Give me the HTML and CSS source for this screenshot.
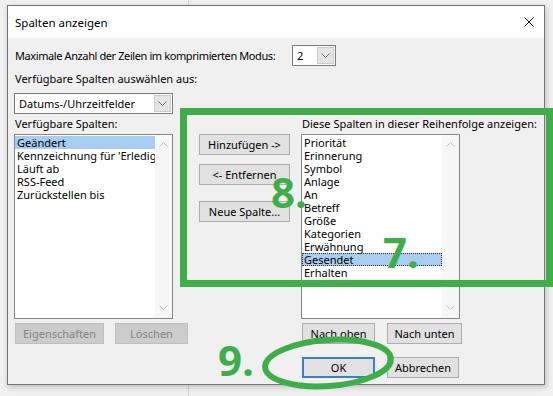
FILE: index.html
```html
<!DOCTYPE html>
<html lang="de">
<head>
    <meta charset="UTF-8">
    <title>Spalten anzeigen</title>
    <link rel="stylesheet" href="styles.css">
</head>
<body>
    <div class="dialog">
        <!-- Titelleiste -->
        <div class="titlebar">
            <span class="title">Spalten anzeigen</span>
            <svg class="close" width="10" height="10" viewBox="0 0 10 10">
                <path d="M0.5 0.5 L9.5 9.5 M9.5 0.5 L0.5 9.5" stroke="#111" stroke-width="1" fill="none"/>
            </svg>
        </div>

        <div class="content">
            <div class="row-max">
                <span class="max-label">Maximale Anzahl der Zeilen im komprimierten Modus:</span>
                <div class="combo combo-small">
                    <span class="combo-value">2</span>
                    <span class="combo-btn">
                        <svg width="9" height="5" viewBox="0 0 9 5"><path d="M0.5 0.5 L4.5 4.5 L8.5 0.5" stroke="#6d6d6d" fill="none"/></svg>
                    </span>
                </div>
            </div>

            <div class="label-from">Verfügbare Spalten auswählen aus:</div>
            <div class="combo combo-wide">
                <span class="combo-value">Datums-/Uhrzeitfelder</span>
                <span class="combo-btn">
                    <svg width="9" height="5" viewBox="0 0 9 5"><path d="M0.5 0.5 L4.5 4.5 L8.5 0.5" stroke="#6d6d6d" fill="none"/></svg>
                </span>
            </div>

            <div class="columns">
                <!-- links: verfügbare Spalten -->
                <div class="col-left">
                    <div class="col-label">Verfügbare Spalten:</div>
                    <div class="listbox">
                        <ul class="items">
                            <li class="selected">Geändert</li>
                            <li>Kennzeichnung für 'Erledigt'</li>
                            <li>Läuft ab</li>
                            <li>RSS-Feed</li>
                            <li>Zurückstellen bis</li>
                        </ul>
                        <div class="scrollbar">
                            <svg width="9" height="5" viewBox="0 0 9 5"><path d="M0.5 4.5 L4.5 0.5 L8.5 4.5" stroke="#c2c2c2" fill="none"/></svg>
                            <svg width="9" height="5" viewBox="0 0 9 5"><path d="M0.5 0.5 L4.5 4.5 L8.5 0.5" stroke="#c2c2c2" fill="none"/></svg>
                        </div>
                    </div>
                    <div class="btn-row">
                        <button class="btn btn-props" disabled>Eigenschaften</button>
                        <button class="btn btn-delete" disabled>Löschen</button>
                    </div>
                </div>

                <!-- mitte: hinzufügen / entfernen -->
                <div class="col-mid">
                    <button class="btn btn-mid">Hinzufügen -&gt;</button>
                    <button class="btn btn-mid btn-remove">&lt;- Entfernen</button>
                    <button class="btn btn-mid btn-new">Neue Spalte...</button>
                </div>

                <!-- rechts: angezeigte Spalten -->
                <div class="col-right">
                    <div class="col-label">Diese Spalten in dieser Reihenfolge anzeigen:</div>
                    <div class="listbox">
                        <ul class="items">
                            <li>Priorität</li>
                            <li>Erinnerung</li>
                            <li>Symbol</li>
                            <li>Anlage</li>
                            <li>An</li>
                            <li>Betreff</li>
                            <li>Größe</li>
                            <li>Kategorien</li>
                            <li>Erwähnung</li>
                            <li class="selected focus">Gesendet</li>
                            <li>Erhalten</li>
                        </ul>
                        <div class="scrollbar">
                            <svg width="9" height="5" viewBox="0 0 9 5"><path d="M0.5 4.5 L4.5 0.5 L8.5 4.5" stroke="#c2c2c2" fill="none"/></svg>
                            <svg width="9" height="5" viewBox="0 0 9 5"><path d="M0.5 0.5 L4.5 4.5 L8.5 0.5" stroke="#c2c2c2" fill="none"/></svg>
                        </div>
                    </div>
                    <div class="btn-row btn-row-right">
                        <button class="btn btn-up">Nach oben</button>
                        <button class="btn btn-down">Nach unten</button>
                    </div>
                    <div class="btn-row btn-row-ok">
                        <button class="btn btn-ok">OK</button>
                        <button class="btn btn-cancel">Abbrechen</button>
                    </div>
                </div>
            </div>
        </div>
    </div>

    <!-- grüne Markierungen -->
    <div class="mark-box"></div>
    <span class="mark-num num-8">8.</span>
    <span class="mark-num num-7">7.</span>
    <span class="mark-num num-9">9.</span>
    <svg class="mark-ring" width="160" height="70" viewBox="0 0 160 70">
        <ellipse cx="80" cy="35" rx="63" ry="23" transform="rotate(-4 80 35)" fill="none" stroke="#3fae4a" stroke-width="6"/>
    </svg>
</body>
</html>
```

FILE: styles.css
```css
* {
    margin: 0;
    padding: 0;
    box-sizing: border-box;
}
ul {
    list-style: none;
}
html, body {
    width: 553px;
    height: 396px;
    overflow: hidden;
}
body {
    position: relative;
    font-family: "Noto Sans", "Liberation Sans", sans-serif;
    font-size: 11px;
    color: #000;
    white-space: nowrap;
    background: linear-gradient(to right, transparent 188px, #d2d2d2 188px, #d2d2d2 189px, transparent 189px), #f1f1f1;
    padding: 5px 0 0 7px;
}
.dialog {
    width: 538px;
    height: 380px;
    border: 1px solid #747474;
    background: #f0f0f0;
    box-shadow: 1px 2px 6px rgba(0, 0, 0, 0.22);
}
.titlebar {
    height: 32px;
    background: #fff;
    display: flex;
    align-items: center;
    justify-content: space-between;
    padding: 0 10px 0 7px;
}
.title {
    font-size: 11.5px;
}
.content {
    padding: 7px 0 0 6px;
}

/* erste Zeile */
.row-max {
    display: grid;
    grid-template-columns: 278px 44px;
    align-items: center;
    height: 21px;
}
.max-label {
    letter-spacing: -0.4px;
    padding-left: 1px;
}
.label-from {
    margin-top: 6px;
    line-height: 14px;
    padding-left: 1px;
}

/* Kombinationsfelder */
.combo {
    height: 21px;
    border: 1px solid #7a7a7a;
    background: #fff;
    display: flex;
    align-items: center;
    justify-content: space-between;
    padding: 1px;
}
.combo-value {
    padding-left: 3px;
}
.combo-btn {
    width: 17px;
    height: 17px;
    background: #e5e5e5;
    border: 1px solid #cbcbcb;
    display: flex;
    align-items: center;
    justify-content: center;
}
.combo-wide {
    width: 159px;
    margin-top: 7px;
}

/* drei Spalten */
.columns {
    display: flex;
}
.col-left {
    width: 185px;
}
.col-mid {
    width: 102px;
    padding-top: 20px;
    display: flex;
    flex-direction: column;
    align-items: flex-start;
}
.col-label {
    margin-top: 3px;
    line-height: 14px;
    margin-bottom: 3px;
    padding-left: 1px;
}

/* Listenfelder */
.listbox {
    width: 159px;
    height: 185px;
    border: 1px solid #828790;
    background: #fff;
    display: flex;
}
.items {
    flex: 1;
    padding-top: 1px;
    overflow: hidden;
}
.items li {
    height: 13px;
    line-height: 13px;
    padding-left: 2px;
}
.items li.selected {
    background: #a8cdf1;
}
.items li.focus {
    outline: 1px dotted #333;
    outline-offset: -1px;
}
.scrollbar {
    width: 17px;
    background: #f7f7f7;
    display: flex;
    flex-direction: column;
    justify-content: space-between;
    align-items: center;
    padding: 7px 0 8px;
}

/* Schaltflächen */
.btn {
    height: 21px;
    border: 1px solid #adadad;
    background: #e1e1e1;
    font-family: inherit;
    font-size: 11px;
    color: #000;
}
.btn:disabled {
    background: #cccccc;
    border-color: #bfbfbf;
    color: #838383;
}
.btn-row {
    display: flex;
    gap: 11px;
    margin-top: 4px;
    padding-left: 1px;
}
.btn-props {
    width: 89px;
}
.btn-delete {
    width: 73px;
}
.btn-mid {
    width: 91px;
}
.btn-remove {
    margin-top: 9px;
}
.btn-new {
    margin-top: 16px;
}
.btn-row-right {
    gap: 12px;
}
.btn-up {
    width: 73px;
}
.btn-down {
    width: 75px;
}
.btn-row-ok {
    margin-top: 13px;
    gap: 12px;
}
.btn-ok {
    width: 73px;
    border: 2px solid #3b7fc4;
}
.btn-cancel {
    width: 72px;
}

/* grüne Markierungen */
.mark-box {
    position: absolute;
    left: 180px;
    top: 108px;
    width: 373px;
    height: 179px;
    border: 7px solid #3fae4a;
}
.mark-num {
    position: absolute;
    font-family: "Open Sans", sans-serif;
    font-weight: 700;
    font-size: 42px;
    line-height: 1;
    color: #3fae4a;
}
.num-8 {
    left: 271px;
    top: 171px;
}
.num-7 {
    left: 383px;
    top: 231px;
}
.num-9 {
    left: 218px;
    top: 339px;
}
.mark-ring {
    position: absolute;
    left: 248px;
    top: 328px;
}
```
